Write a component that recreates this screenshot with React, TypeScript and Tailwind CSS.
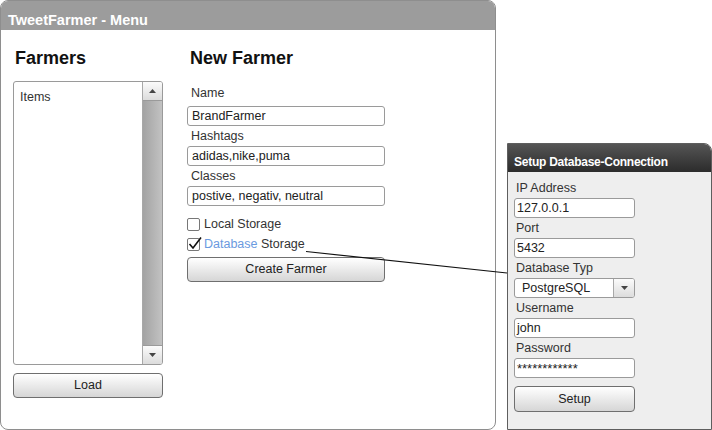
import React from "react";

const font = { fontFamily: '"Liberation Sans", Arial, sans-serif' };

function TriUp() {
  return (
    <svg width="7" height="4" viewBox="0 0 7 4">
      <polygon points="0,4 7,4 3.5,0" fill="#444" />
    </svg>
  );
}
function TriDown() {
  return (
    <svg width="7" height="4" viewBox="0 0 7 4">
      <polygon points="0,0 7,0 3.5,4" fill="#444" />
    </svg>
  );
}

function Field({ value, pad = "pl-[4px]" }: { value: string; pad?: string }) {
  return (
    <div
      className={`h-[20px] border border-[#9a9a9a] rounded-[3px] bg-white flex items-center ${pad} text-[12.5px] text-[#222] leading-none`}
    >
      {value}
    </div>
  );
}

function Label({ text, pad = "pl-[4px]" }: { text: string; pad?: string }) {
  return (
    <div className={`h-[20px] flex items-center ${pad} text-[12.5px] text-[#333] leading-none`}>
      {text}
    </div>
  );
}

function Button({ text, h = "h-[25px]" }: { text: string; h?: string }) {
  return (
    <div
      className={`${h} border border-[#6f6f6f] rounded-[4px] bg-gradient-to-b from-[#ffffff] to-[#d6d6d6] flex items-center justify-center text-[12.5px] text-[#222]`}
    >
      {text}
    </div>
  );
}

export default function App() {
  return (
    <div className="relative w-[712px] h-[430px] bg-white flex items-start overflow-hidden" style={font}>
      {/* Main window */}
      <div className="w-[496px] h-[430px] border border-[#8e8e8e] rounded-[8px] overflow-hidden flex flex-col bg-white">
        <div className="h-[29px] shrink-0 bg-[#9c9c9c] pl-[7px] pt-[10px] text-white font-bold text-[14.5px] leading-[18px]">
          TweetFarmer - Menu
        </div>
        <div className="flex pl-[12px]">
          {/* Farmers column */}
          <div className="w-[150px] flex flex-col">
            <div className="mt-[17px] h-[22px] pl-[2px] text-[18px] font-bold leading-[22px] text-[#111]">
              Farmers
            </div>
            <div className="mt-[12px] h-[284px] border border-[#9a9a9a] rounded-[3px] flex overflow-hidden">
              <div className="flex-1 pl-[6px] pt-[8px] text-[12.5px] text-[#333] leading-[14px]">Items</div>
              <div className="w-[20px] border-l border-[#a8a8a8] flex flex-col">
                <div className="h-[19px] border-b border-[#9a9a9a] bg-gradient-to-b from-[#fbfbfb] to-[#dcdcdc] flex items-center justify-center">
                  <TriUp />
                </div>
                <div className="flex-1 bg-gradient-to-r from-[#a3a3a3] to-[#c2c2c2]" />
                <div className="h-[19px] border-t border-[#9a9a9a] bg-gradient-to-b from-[#fbfbfb] to-[#dcdcdc] flex items-center justify-center">
                  <TriDown />
                </div>
              </div>
            </div>
            <div className="mt-[8px]">
              <Button text="Load" />
            </div>
          </div>

          {/* New Farmer column */}
          <div className="w-[198px] ml-[24px] flex flex-col">
            <div className="mt-[17px] h-[22px] pl-[3px] text-[18px] font-bold leading-[22px] text-[#111]">
              New Farmer
            </div>
            <div className="mt-[16px] h-[16px] pl-[4px] text-[12.5px] text-[#333] leading-[16px]">Name</div>
            <div className="mt-[5px]">
              <Field value="BrandFarmer" />
            </div>
            <Label text="Hashtags" />
            <Field value="adidas,nike,puma" />
            <Label text="Classes" />
            <Field value="postive, negativ, neutral" />

            <div className="mt-[12px] h-[13px] flex items-center text-[12.5px] text-[#333] leading-none">
              <div className="w-[13px] h-[13px] border border-[#777] rounded-[2px] bg-white" />
              <span className="ml-[4px]">Local Storage</span>
            </div>
            <div className="mt-[7px] h-[13px] flex items-center text-[12.5px] text-[#333] leading-none">
              <div className="relative w-[13px] h-[13px] border border-[#777] rounded-[2px] bg-white">
                <svg className="absolute left-[0px] top-[-3px] overflow-visible" width="14" height="14" viewBox="0 0 14 14">
                  <polyline points="1.5,8 5,12 13,1.5" fill="none" stroke="#111" strokeWidth="1.6" />
                </svg>
              </div>
              <span className="ml-[4px]">
                <span className="text-[#6a9ae0]">Database</span> Storage
              </span>
            </div>
            <div className="mt-[6px]">
              <Button text="Create Farmer" />
            </div>
          </div>
        </div>
      </div>

      {/* Setup panel */}
      <div className="ml-[11px] mt-[143px] w-[205px] h-[287px] border border-[#5e5e5e] rounded-tr-[8px] overflow-hidden bg-[#eeeeee] flex flex-col">
        <div className="h-[28px] shrink-0 bg-gradient-to-b from-[#555555] to-[#2c2c2c] pl-[6px] pt-[10px] text-white font-bold text-[12px] leading-[16px] tracking-[-0.25px]">
          Setup Database-Connection
        </div>
        <div className="pl-[6px] pt-[6px] w-[127px] flex flex-col">
          <Label text="IP Address" pad="pl-[2px]" />
          <Field value="127.0.0.1" pad="pl-[2px]" />
          <Label text="Port" pad="pl-[2px]" />
          <Field value="5432" pad="pl-[2px]" />
          <Label text="Database Typ" pad="pl-[2px]" />
          <div className="h-[20px] border border-[#9a9a9a] rounded-[3px] bg-white flex overflow-hidden">
            <div className="flex-1 pl-[7px] flex items-center text-[12.5px] text-[#222] leading-none">PostgreSQL</div>
            <div className="w-[21px] border-l border-[#a8a8a8] bg-gradient-to-b from-[#fbfbfb] to-[#dcdcdc] flex items-center justify-center">
              <TriDown />
            </div>
          </div>
          <Label text="Username" pad="pl-[2px]" />
          <Field value="john" pad="pl-[2px]" />
          <Label text="Password" pad="pl-[2px]" />
          <div className="h-[20px] border border-[#9a9a9a] rounded-[3px] bg-white flex items-center pl-[2px] text-[13px] text-[#222] leading-none">
            ************
          </div>
          <div className="mt-[8px]">
            <Button text="Setup" h="h-[26px]" />
          </div>
        </div>
      </div>

      {/* Connector line */}
      <svg className="absolute left-0 top-0 pointer-events-none" width="712" height="430">
        <line x1="306" y1="251.5" x2="507" y2="273" stroke="#111" strokeWidth="1.2" />
      </svg>
    </div>
  );
}
